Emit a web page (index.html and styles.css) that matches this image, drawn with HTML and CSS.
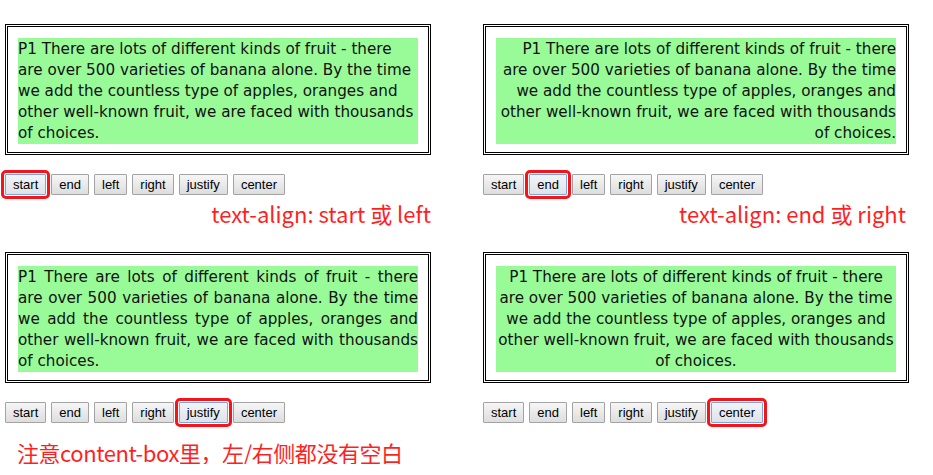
FILE: index.html
```html
<!DOCTYPE html>
<html lang="zh-CN">
<head>
<meta charset="utf-8">
<title>text-align</title>
<link rel="stylesheet" href="styles.css">
</head>
<body>
<div class="grid">
  <section class="demo">
    <div class="box"><p class="para align-start">P1 There are lots of different kinds of fruit - there are over 500 varieties of banana alone. By the time we add the countless type of apples, oranges and other well-known fruit, we are faced with thousands of choices.</p></div>
    <div class="buttons">
      <button class="btn active">start</button>
      <button class="btn">end</button>
      <button class="btn">left</button>
      <button class="btn">right</button>
      <button class="btn">justify</button>
      <button class="btn">center</button>
    </div>
    <p class="note note-right">text-align: start 或 left</p>
  </section>
  <section class="demo">
    <div class="box"><p class="para align-end">P1 There are lots of different kinds of fruit - there are over 500 varieties of banana alone. By the time we add the countless type of apples, oranges and other well-known fruit, we are faced with thousands of choices.</p></div>
    <div class="buttons">
      <button class="btn">start</button>
      <button class="btn active">end</button>
      <button class="btn">left</button>
      <button class="btn">right</button>
      <button class="btn">justify</button>
      <button class="btn">center</button>
    </div>
    <p class="note note-right note-inset">text-align: end 或 right</p>
  </section>
  <section class="demo">
    <div class="box"><p class="para align-justify">P1 There are lots of different kinds of fruit - there are over 500 varieties of banana alone. By the time we add the countless type of apples, oranges and other well-known fruit, we are faced with thousands of choices.</p></div>
    <div class="buttons">
      <button class="btn">start</button>
      <button class="btn">end</button>
      <button class="btn">left</button>
      <button class="btn">right</button>
      <button class="btn active">justify</button>
      <button class="btn">center</button>
    </div>
    <p class="note note-left">注意content-box里，左/右侧都没有空白</p>
  </section>
  <section class="demo">
    <div class="box"><p class="para align-center">P1 There are lots of different kinds of fruit - there are over 500 varieties of banana alone. By the time we add the countless type of apples, oranges and other well-known fruit, we are faced with thousands of choices.</p></div>
    <div class="buttons">
      <button class="btn">start</button>
      <button class="btn">end</button>
      <button class="btn">left</button>
      <button class="btn">right</button>
      <button class="btn">justify</button>
      <button class="btn active">center</button>
    </div>
  </section>
</div>
</body>
</html>
```
FILE: styles.css
```css
html, body {
  margin: 0;
  padding: 0;
  background: #fff;
}

.grid {
  display: grid;
  grid-template-columns: 426px 426px;
  column-gap: 52px;
  row-gap: 27px;
  padding: 24px 0 0 5px;
  align-items: start;
}

.demo {
  display: flex;
  flex-direction: column;
}

.box {
  border: 3px double #000;
  padding: 11px 10px 8px;
}

.para {
  margin: 0;
  padding-top: 1px;
  background: #98fb98;
  color: #111;
  font-family: "DejaVu Sans", sans-serif;
  font-size: 15.2px;
  line-height: 21px;
}

.align-start { text-align: start; }
.align-end { text-align: end; }
.align-justify { text-align: justify; }
.align-center { text-align: center; }

.buttons {
  display: flex;
  gap: 5px;
  margin-top: 19px;
}

.btn {
  height: 21px;
  margin: 0;
  padding: 0 7px;
  border: 1px solid #a3a3a3;
  border-radius: 1px;
  background: linear-gradient(#f6f6f6, #dddddd);
  font-family: "Liberation Sans", Arial, sans-serif;
  font-size: 13px;
  line-height: 19px;
  color: #000;
}

.btn.active {
  border-color: #7ea6d8;
  background: linear-gradient(#f1f4f8, #dfe3e8);
  outline: 3px solid #f5141a;
  outline-offset: 1px;
}

.note {
  margin: 0;
  color: #ff1f1f;
  font-family: "Noto Sans CJK SC", "Noto Sans", sans-serif;
  font-size: 22px;
  line-height: 24px;
}

.note-right {
  margin-top: 6px;
  text-align: right;
}

.note-inset {
  padding-right: 3px;
}

.note-left {
  margin-top: 17px;
  padding-left: 12px;
  letter-spacing: -0.45px;
}
```
